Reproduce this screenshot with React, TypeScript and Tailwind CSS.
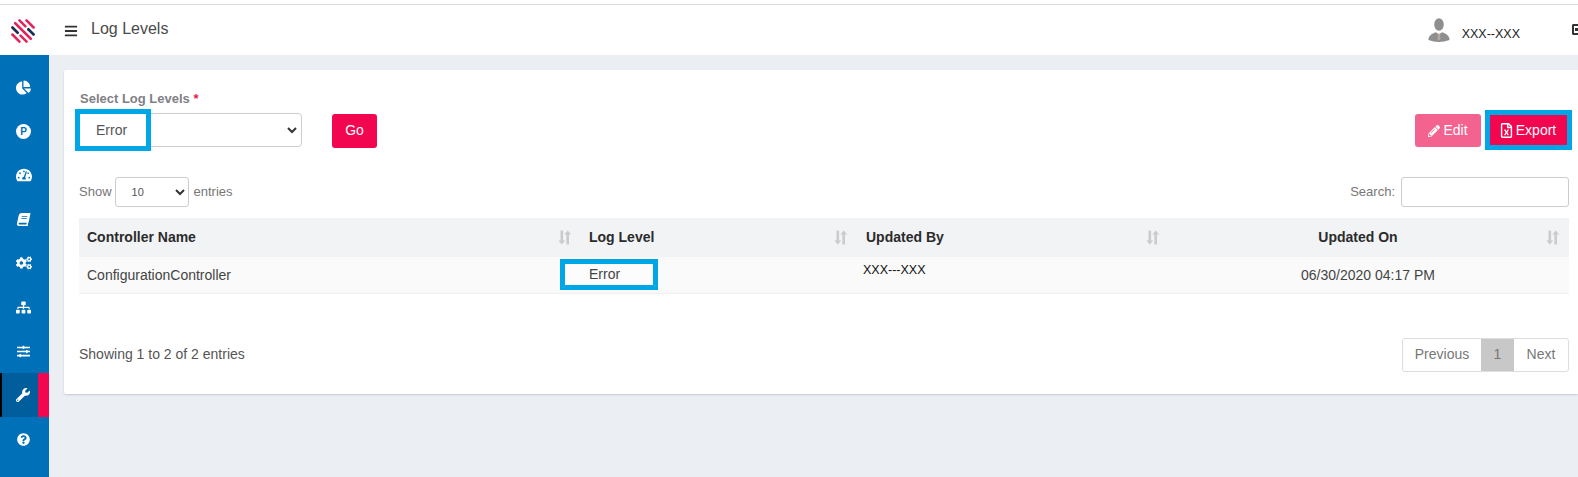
import React from "react";
import { FaBars, FaChartPie, FaTachometerAlt, FaBook, FaCogs, FaSitemap, FaSlidersH, FaWrench, FaQuestionCircle, FaPencilAlt, FaRegFileExcel } from "react-icons/fa";

function Logo() {
  const pink = "#e0265a";
  const navy = "#1c2c55";
  const segs: [number, number, number, string][] = [
    [-10, -5, 5, pink],
    [-5, -10, -1.500, pink],
    [-5, 2.500, 10, navy],
    [0, -11, 11, pink],
    [5, -10, -2.500, navy],
    [5, 1.500, 10, pink],
    [10, -5, 5, pink],
  ];
  return (
    <svg width="30" height="30" viewBox="-15 -15 30 30" aria-hidden="true">
      <g transform="rotate(45)" strokeWidth="2.600" strokeLinecap="round">
        {segs.map(([y, a, b, c], i) => (
          <line key={i} x1={a} x2={b} y1={y} y2={y} stroke={c} />
        ))}
      </g>
    </svg>
  );
}

function ParkingIcon() {
  return (
    <svg width="15" height="15" viewBox="0 0 15 15" aria-hidden="true">
      <circle cx="7.500" cy="7.500" r="7.500" fill="#fff" />
      <text x="7.500" y="11" textAnchor="middle" fontSize="10" fontWeight="700" fill="#0070b8" fontFamily="Liberation Sans, sans-serif">P</text>
    </svg>
  );
}

function UserIcon() {
  return (
    <svg width="22" height="24" viewBox="0 0 24 26" aria-hidden="true">
      <ellipse cx="12" cy="7" rx="5.200" ry="6.800" fill="#8f8f8f" />
      <path d="M0.500 24c0-5 4-7 8-8.500l3.500 2 3.500-2c4 1.500 8 3.500 8 8.500-4 1.500-8 2-11.500 2s-8-.5-11.500-2z" fill="#8f8f8f" />
      <path d="M11 17h2l.6 6-1.600 1.500L10.400 23z" fill="#b9a8a0" />
    </svg>
  );
}

function SortIcon() {
  return (
    <svg width="14" height="15" viewBox="0 0 14 15" className="shrink-0" aria-hidden="true">
      <path d="M2.500 0.500h2.600v10H7.200L3.800 14.500.4 10.500H2.500z" fill="#c9cbcd" />
      <path d="M11 14.500H8.400v-10H6.300L9.700 .5l3.400 4H11z" fill="#c9cbcd" />
    </svg>
  );
}

const navIcons = [
  <FaChartPie key="a" size={15} />,
  <ParkingIcon key="b" />,
  <FaTachometerAlt key="c" size={16} />,
  <FaBook key="d" size={13} className="-skew-x-12" />,
  <FaCogs key="e" size={16} />,
  <FaSitemap key="f" size={15} />,
  <FaSlidersH key="g" size={13} />,
];

export default function App() {
  return (
    <div className="h-[477px] w-[1578px] overflow-hidden bg-[#ebeef3] font-['Liberation_Sans',Arial,sans-serif] flex flex-col">
      <div className="h-[5px] shrink-0 bg-white border-b border-[#dcdcdc]" />
      <header className="h-[50px] shrink-0 bg-white flex items-center relative">
        <div className="w-[46px] flex justify-center shrink-0 mt-[2px]"><Logo /></div>
        <FaBars size={14} className="ml-[18px] text-[#333] mt-[1px]" />
        <h1 className="ml-[13px] text-[16px] text-[#4a4a4a] font-normal -mt-[3px]">Log Levels</h1>
        <div className="ml-auto flex items-center mr-[-2px]">
          <UserIcon />
          <span className="ml-[12px] mr-[52px] text-[12.500px] text-[#222] mt-[9px]">XXX--XXX</span>
          <span className="w-[8px] h-[11px] border-2 border-r-0 border-[#333] rounded-l-[2px] flex items-center mt-[-1px]">
            <span className="block w-[3px] h-[3px] bg-[#333] ml-[1px]" />
          </span>
        </div>
      </header>
      <div className="flex flex-1 min-h-0">
        <nav className="w-[49px] shrink-0 bg-[#0070b8] flex flex-col pt-[10px] text-white">
          {navIcons.map((icon, i) => (
            <div key={i} className="h-[44px] flex items-center justify-center pr-[2px]">{icon}</div>
          ))}
          <div className="h-[44px] flex bg-[#005e9c] border-l-2 border-black">
            <div className="flex-1 flex items-center justify-center ml-[5px]"><FaWrench size={14} /></div>
            <div className="w-[11px] bg-[#f2064f]" />
          </div>
          <div className="h-[44px] flex items-center justify-center pr-[2px]"><FaQuestionCircle size={13} /></div>
        </nav>
        <main className="flex-1 min-w-0 pl-[15px] pt-[15px]">
          <section className="h-[324px] bg-white rounded-l-[2px] shadow-[0_1px_2px_rgba(0,0,0,0.15)] pl-[15px] pr-[9px] pt-[21px]">
            <div className="ml-[1px] text-[13px] font-bold text-[#7f7f86] leading-[16px]">
              Select Log Levels <span className="text-[#e8174f]">*</span>
            </div>
            <div className="flex items-center mt-[6px] h-[34px]">
              <div className="relative ml-[1px] w-[222px] h-[34px] border border-[#ccc] rounded-[4px] bg-white">
                <div className="absolute -left-[6px] -top-[5px] w-[76px] h-[42px] border-[5px] border-[#00a6e6] bg-white flex items-center pl-[16px] text-[14px] text-[#555]">Error</div>
                <svg width="10" height="7" viewBox="0 0 10 7" className="absolute right-[4px] top-[13px]" aria-hidden="true">
                  <path d="M1 1l4 4 4-4" fill="none" stroke="#333" strokeWidth="2" />
                </svg>
              </div>
              <button className="ml-[30px] mt-[1px] w-[45px] h-[34px] bg-[#f2064f] text-white text-[14px] rounded-[3px]">Go</button>
              <button className="ml-auto w-[66px] h-[33px] pt-[1px] bg-[#f46290] text-white text-[14px] rounded-[3px] flex items-center justify-center gap-[3px]">
                <FaPencilAlt size={12} />Edit
              </button>
              <div className="ml-[4px] mr-[-3px] w-[87px] h-[40px] pt-[1px] pr-[2px] border-[5px] border-[#00a6e6] bg-[#f2064f] text-white text-[14px] flex items-center justify-center gap-[2px]">
                <FaRegFileExcel size={15} />Export
              </div>
            </div>
            <div className="flex items-center justify-between mt-[30px] h-[30px] text-[13px] text-[#777]">
              <div className="flex items-center">
                <span>Show</span>
                <div className="relative ml-[3px] mr-[5px] w-[74px] h-[30px] border border-[#ccc] rounded-[3px] flex items-center pl-[16px] text-[#555] text-[11px]">
                  10
                  <svg width="10" height="7" viewBox="0 0 10 7" className="absolute right-[3px] top-[11px]" aria-hidden="true">
                    <path d="M1 1l4 4 4-4" fill="none" stroke="#333" strokeWidth="2" />
                  </svg>
                </div>
                <span>entries</span>
              </div>
              <div className="flex items-center">
                <span>Search:</span>
                <div className="ml-[6px] w-[168px] h-[30px] border border-[#ccc] rounded-[3px]" />
              </div>
            </div>
            <table className="mt-[11px] w-full table-fixed border-collapse text-[14px]">
              <colgroup>
                <col className="w-[502px]" />
                <col className="w-[276px]" />
                <col className="w-[313px]" />
                <col />
              </colgroup>
              <thead>
                <tr className="h-[39px] bg-[#f2f3f5] text-[#2b2b2b]">
                  <th className="font-bold text-left pl-[8px] pr-[9px]"><div className="flex justify-between items-center">Controller Name<SortIcon /></div></th>
                  <th className="font-bold text-left pl-[8px] pr-[9px]"><div className="flex justify-between items-center">Log Level<SortIcon /></div></th>
                  <th className="font-bold text-left pl-[9px] pr-[10px]"><div className="flex justify-between items-center">Updated By<SortIcon /></div></th>
                  <th className="font-bold pr-[9px]"><div className="flex items-center"><span className="flex-1 text-center">Updated On</span><SortIcon /></div></th>
                </tr>
              </thead>
              <tbody>
                <tr className="h-[36px] bg-[#fafafa] border-b border-[#efefef] text-[#444]">
                  <td className="pl-[8px] pt-[2px]">ConfigurationController</td>
                  <td>
                    <div className="w-[98px] h-[31px] -ml-[21px] border-[5px] border-[#00a6e6] bg-[#fcfcfc] flex items-center pl-[24px]">Error</div>
                  </td>
                  <td className="pl-[6px] pb-[8px] text-[12.500px] text-[#111]">XXX---XXX</td>
                  <td className="text-center pr-[3px] pt-[2px]">06/30/2020 04:17 PM</td>
                </tr>
              </tbody>
            </table>
            <div className="flex items-center justify-between mt-[44px] h-[34px]">
              <span className="text-[14px] text-[#555]">Showing 1 to 2 of 2 entries</span>
              <div className="flex h-[34px] w-[167px] border border-[#ddd] rounded-[3px] text-[14px] text-[#777]">
                <span className="w-[78px] flex items-center justify-center">Previous</span>
                <span className="w-[33px] flex items-center justify-center bg-[#c8c8c8]">1</span>
                <span className="flex-1 flex items-center justify-center">Next</span>
              </div>
            </div>
          </section>
        </main>
      </div>
    </div>
  );
}
